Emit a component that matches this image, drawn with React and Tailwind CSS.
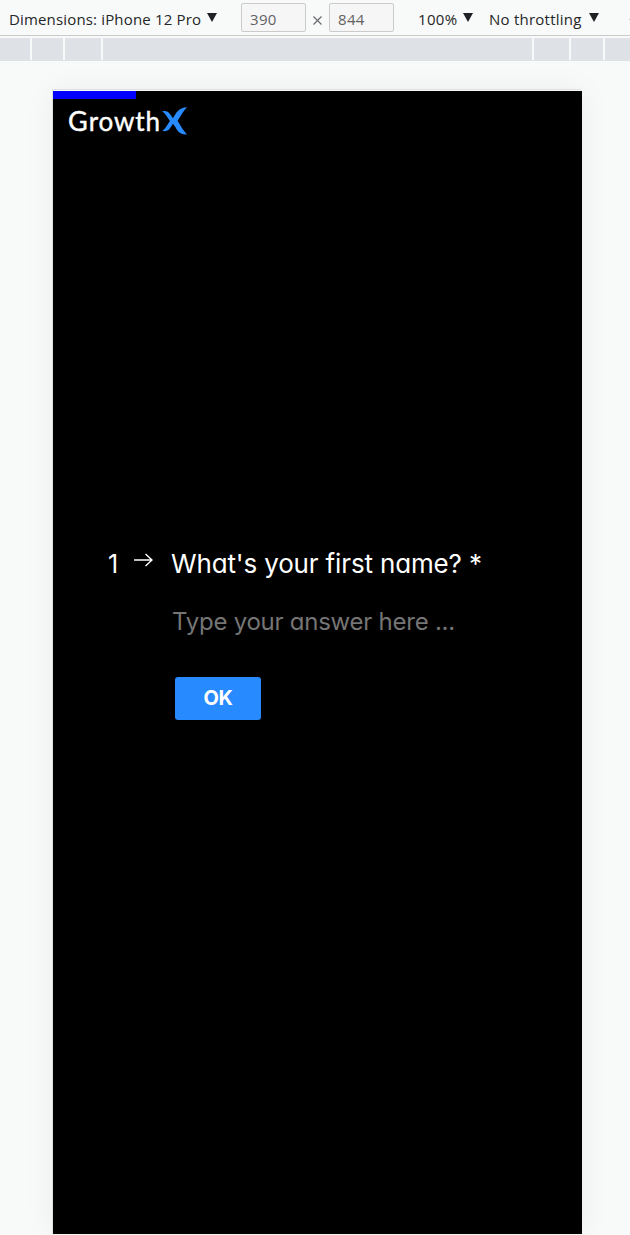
import React from "react";

function Caret() {
  return (
    <svg className="block h-[9px] w-[10px] shrink-0" viewBox="0 0 10 9">
      <path d="M0 0H10L5 9Z" fill="#202124" />
    </svg>
  );
}

function Toolbar() {
  return (
    <header className="flex h-9 w-full items-start overflow-hidden border-b border-[#cacaca] font-['Open_Sans','Noto_Sans',sans-serif] text-[15px] leading-5 text-[#252628]">
      <div className="ml-[9px] mt-[9px] flex w-[232px] shrink-0">
        <span className="w-[198px] whitespace-nowrap tracking-[0.16px]">Dimensions: iPhone 12 Pro</span>
        <span className="mt-1"><Caret /></span>
      </div>
      <div className="mt-[3px] flex h-[29px] w-[65px] shrink-0 items-center rounded-[2px] border border-[#cbcbcb] bg-[#f6f6f6] pl-2 pt-[3px] tracking-[0.3px] text-[#626262]">390</div>
      <svg className="ml-[7px] mt-4 h-[9px] w-[9px] shrink-0" viewBox="0 0 9 9">
        <path d="M0.5 0.5L8.5 8.5M8.5 0.5L0.5 8.5" stroke="#6b6b70" strokeWidth="1.2" />
      </svg>
      <div className="ml-[7px] mt-[3px] flex h-[29px] w-[65px] shrink-0 items-center rounded-[2px] border border-[#cbcbcb] bg-[#f6f6f6] pl-2 pt-[3px] tracking-[0.3px] text-[#626262]">844</div>
      <div className="ml-6 mt-[9px] flex w-[71px] shrink-0">
        <span className="w-[45px] tracking-[0.3px]">100%</span>
        <span className="mt-1"><Caret /></span>
      </div>
      <div className="mt-[9px] flex w-[140px] shrink-0">
        <span className="w-[100px] whitespace-nowrap tracking-[0.24px]">No throttling</span>
        <span className="mt-1"><Caret /></span>
      </div>
      <span className="mt-[19px] h-px w-px bg-[#c2c5c9]" />
    </header>
  );
}

function Ruler() {
  return (
    <div className="mt-[2px] flex h-[23px] w-full gap-[2px] border-b border-[#dee1e6]">
      <span className="w-[30px] bg-[#dee1e6]" />
      <span className="w-[31px] bg-[#dee1e6]" />
      <span className="w-[36px] bg-[#dee1e6]" />
      <span className="w-[429px] bg-[#dee1e6]" />
      <span className="w-[35px] bg-[#dee1e6]" />
      <span className="w-[32px] bg-[#dee1e6]" />
      <span className="flex-1 bg-[#dee1e6]" />
    </div>
  );
}

function Logo() {
  return (
    <div className="ml-[15px] mt-[6px] flex h-[33px] items-start text-white">
      <span className="flex w-[94px] items-baseline whitespace-nowrap font-['Lato',sans-serif] text-[26px] leading-[32px] tracking-[0.9px] [-webkit-text-stroke:0.4px_white]"><span className="text-[27px]">G</span>rowth</span>
      <svg className="mt-[2px] h-[28px] w-[25px]" viewBox="0 0 25 28">
        <path d="M0.3 4.2C4 3.4 6 4.2 7.6 6.6L11 11.2C14 6 16.5 0.6 25 0.2C22 3 19.5 7.5 15.6 13.8C19 19.5 21.5 24 25 27.4C18 28 15.5 24 13.8 20.8L11 16.8L8 21.2C6 24 4 24.4 0.3 24C3.5 21.5 5 18.5 7.9 14C5 9.5 3.5 6.8 0.3 4.2Z" fill="#278bff" />
      </svg>
    </div>
  );
}

function Question() {
  return (
    <section className="mt-[407px] pl-[54px] font-['Inter',sans-serif] [font-feature-settings:'cv11'_1]">
      <div className="flex h-[38px] items-start text-[25px] leading-[38px] text-white">
        <span className="w-[27px] pl-px">1</span>
        <svg className="mt-[8px] h-[14px] w-[19px]" viewBox="0 0 19 14" fill="none" stroke="white" strokeWidth="1.4">
          <path d="M0 7H18M11.5 1L18 7L11.5 13" />
        </svg>
        <h1 className="ml-[18px] whitespace-nowrap text-[26px] tracking-[-0.15px]">What's your first name? *</h1>
      </div>
      <input
        className="ml-[65px] mt-[18px] block h-[40px] w-[310px] bg-transparent text-[24px] tracking-[-0.25px] text-white outline-none placeholder:text-[#757575]"
        placeholder="Type your answer here ..."
      />
      <button className="ml-[68px] mt-[36px] block h-[43px] w-[86px] rounded-[3px] bg-[#278bff] text-[20px] font-bold leading-[43px] tracking-[-0.3px] text-white">OK</button>
    </section>
  );
}

export default function App() {
  return (
    <main className="h-[1235px] w-full overflow-hidden bg-[#f8faf9]">
      <Toolbar />
      <Ruler />
      <div className="h-[1174px] overflow-hidden pl-[53px] pt-[30px]">
        <div className="h-[1143px] w-[529px] bg-black shadow-[0_-1px_0_0_#f8faf9,-1px_0_0_0_#dfe1e0,-1px_-2px_0_0_#dfe1e0,0_0_30px_rgba(0,0,0,0.06)]">
          <div className="h-2 w-[83px] bg-[#0000ff]" />
          <Logo />
          <Question />
        </div>
      </div>
    </main>
  );
}
